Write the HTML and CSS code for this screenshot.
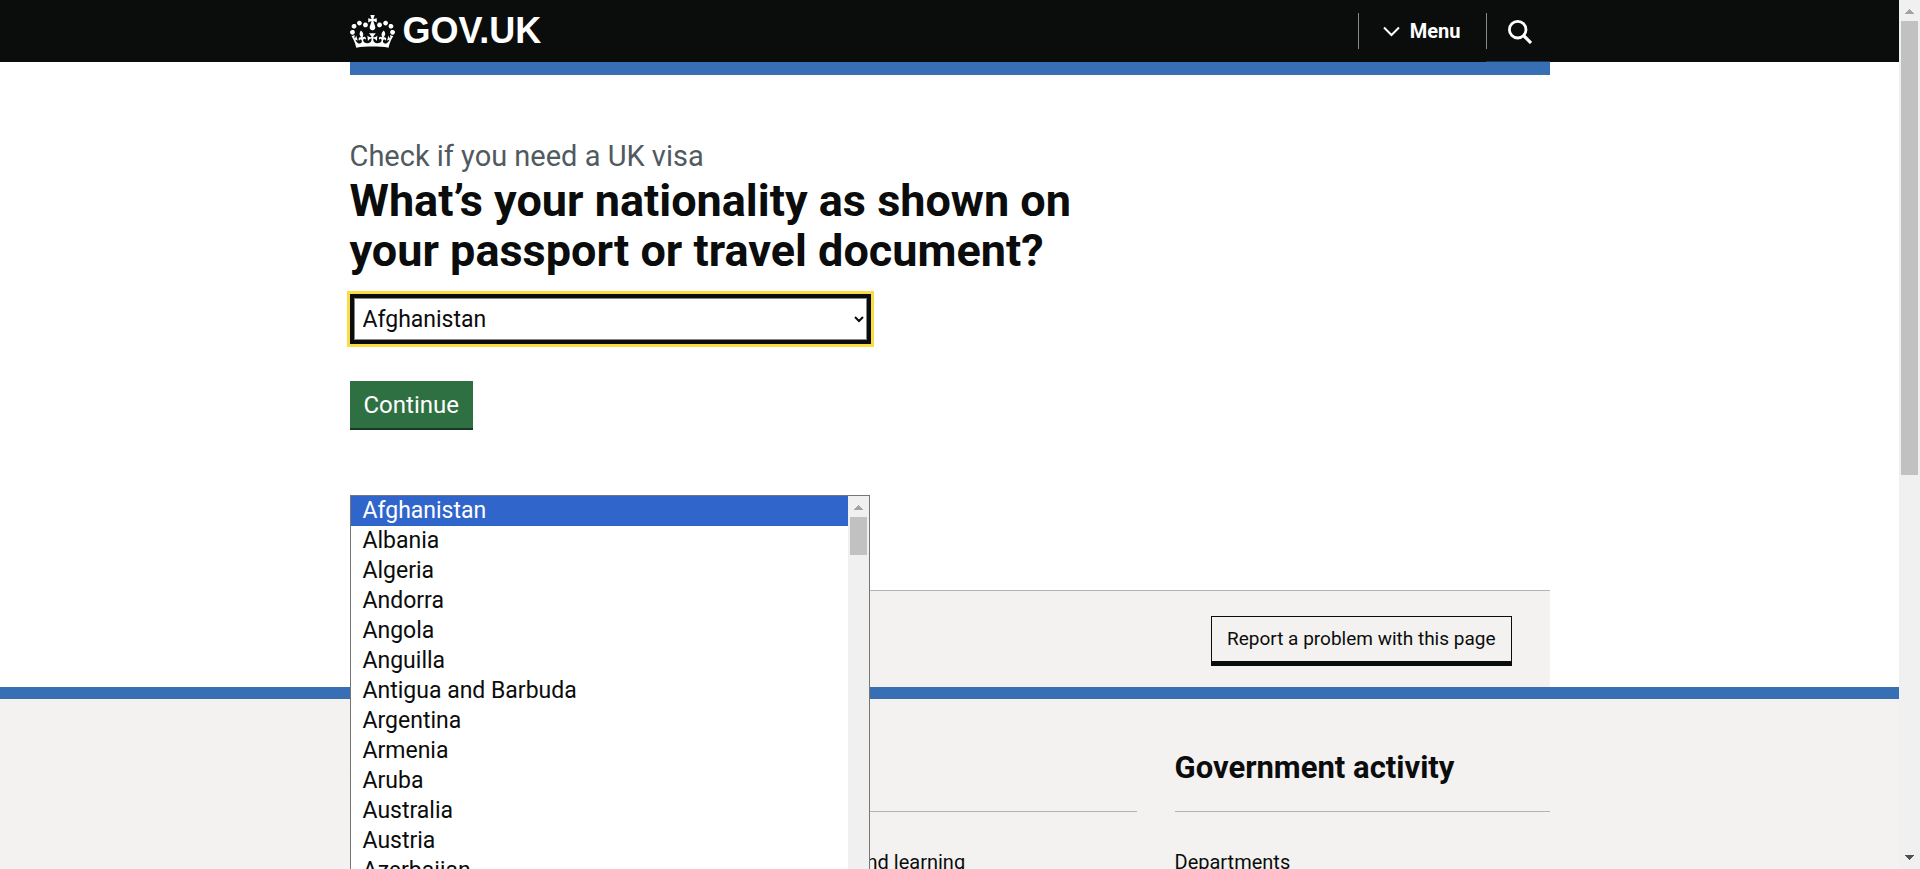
FILE: index.html
```html
<!DOCTYPE html>
<html lang="en">
<head>
<meta charset="utf-8">
<meta name="viewport" content="width=device-width, initial-scale=1">
<title>Check if you need a UK visa - GOV.UK</title>
<link rel="stylesheet" href="styles.css">
</head>
<body>
<div class="window">
  <div class="page">
    <header class="header">
      <div class="container header-row">
        <a class="logo" href="#" aria-label="GOV.UK">
          <svg class="crown" viewBox="0 0 132 97" aria-hidden="true"><path fill="currentColor" fill-rule="evenodd" d="M25 30.2c3.5 1.5 7.7-.2 9.1-3.7 1.5-3.6-.2-7.8-3.9-9.2-3.6-1.4-7.6.3-9.1 3.9-1.4 3.5.3 7.5 3.9 9zM9 39.5c3.6 1.5 7.8-.2 9.2-3.7 1.5-3.6-.2-7.8-3.9-9.1-3.6-1.5-7.6.2-9.1 3.8-1.4 3.5.3 7.5 3.8 9zM4.4 57.2c3.5 1.5 7.7-.2 9.1-3.8 1.5-3.6-.2-7.7-3.9-9.1-3.5-1.5-7.6.3-9.1 3.8-1.4 3.5.3 7.6 3.9 9.1zm38.3-21.4c3.5 1.5 7.7-.2 9.1-3.8 1.5-3.6-.2-7.7-3.9-9.1-3.6-1.5-7.6.3-9.1 3.8-1.3 3.6.4 7.7 3.9 9.1zm64.4-5.6c-3.6 1.5-7.8-.2-9.1-3.7-1.5-3.6.2-7.8 3.8-9.2 3.6-1.4 7.7.3 9.2 3.9 1.3 3.5-.4 7.5-3.9 9zm15.9 9.3c-3.6 1.5-7.7-.2-9.1-3.7-1.5-3.6.2-7.8 3.7-9.1 3.6-1.5 7.7.2 9.2 3.8 1.5 3.5-.3 7.5-3.8 9zm4.7 17.7c-3.6 1.5-7.8-.2-9.2-3.8-1.5-3.6.2-7.7 3.9-9.1 3.6-1.5 7.7.3 9.2 3.8 1.3 3.5-.4 7.6-3.9 9.1zM89.3 35.8c-3.6 1.5-7.8-.2-9.2-3.8-1.4-3.6.2-7.7 3.9-9.1 3.6-1.5 7.7.3 9.2 3.8 1.4 3.6-.3 7.7-3.9 9.1zM69.7 17.7l8.9 4.7V9.3l-8.9 2.8c-.2-.3-.5-.6-.9-.9L72.4 0H59.6l3.5 11.2c-.3.3-.6.5-.9.9l-8.8-2.8v13.1l8.8-4.7c.3.3.6.7.9.9l-5 15.4v.1c-.2.8-.4 1.6-.4 2.4 0 4.1 3.1 7.5 7 8.1h.2c.3 0 .7.1 1 .1.4 0 .7 0 1-.1h.2c4-.6 7.1-4.1 7.1-8.1 0-.8-.1-1.7-.4-2.4V34l-5.1-15.4c.4-.2.7-.6 1-.9zM66 92.8c16.9 0 32.8 1.1 47.1 3.2 4-16.9 8.9-26.7 14-33.5l-9.6-3.4c1 4.9 1.1 7.2 0 10.2-1.5-1.4-3-4.3-4.2-8.7L108.6 76c2.8-2 5-3.2 7.5-3.3-4.4 9.4-10 11.9-13.6 11.2-4.3-.8-6.3-4.6-5.6-7.9 1-4.7 5.7-5.9 8-.5 4.3-8.7-3-11.4-7.6-8.8 7.1-7.2 7.9-13.5 2.1-21.1-8 6.1-8.1 12.3-4.5 20.8-4.7-5.4-12.1-2.5-9.5 6.2 3.4-5.2 7.9-2 7.2 3.1-.6 4.3-6.4 7.8-13.5 7.2-10.3-.9-10.9-8-11.2-13.8 2.5-.5 7.1 1.8 11 7.3L80.2 60c-4.1 4.4-8 5.3-12.3 5.4 1.4-4.4 8-11.6 8-11.6H55.5s6.4 7.2 7.9 11.6c-4.2-.1-8-1-12.3-5.4l1.4 16.4c3.9-5.5 8.5-7.7 10.9-7.3-.3 5.8-.9 12.8-11.1 13.8-7.2.6-12.9-2.9-13.5-7.2-.7-5 3.8-8.3 7.1-3.1 2.7-8.7-4.6-11.6-9.4-6.2 3.7-8.5 3.6-14.7-4.6-20.8-5.8 7.6-5 13.9 2.2 21.1-4.7-2.6-11.9.1-7.7 8.8 2.3-5.5 7.1-4.2 8.1.5.7 3.3-1.3 7.1-5.7 7.9-3.5.7-9-1.8-13.5-11.2 2.5.1 4.7 1.3 7.5 3.3l-4.7-15.4c-1.2 4.4-2.7 7.2-4.3 8.7-1.1-3-.9-5.3 0-10.2l-9.5 3.4c5 6.9 9.9 16.7 14 33.5 14.8-2.1 30.8-3.2 47.7-3.2z"/></svg>
          <span>GOV.UK</span>
        </a>
        <nav class="header-nav" aria-label="Menu">
          <button class="menu-button" type="button">
            <svg class="chevron" viewBox="0 0 17 11" aria-hidden="true"><path d="M1 1.500l7.500 7.500L16 1.500" fill="none" stroke="currentColor" stroke-width="2"/></svg>
            <span>Menu</span>
          </button>
          <button class="search-button" type="button" aria-label="Search GOV.UK">
            <svg class="search-icon" viewBox="0 0 24 24" aria-hidden="true"><circle cx="9.700" cy="9.700" r="8.300" fill="none" stroke="currentColor" stroke-width="2.800"/><path d="M15.500 15.500l7.500 7.500" stroke="currentColor" stroke-width="3.200"/></svg>
          </button>
        </nav>
      </div>
    </header>
    <div class="container"><div class="header-bar"></div></div>

    <main class="container main">
      <form class="question">
        <span class="caption">Check if you need a UK visa</span>
        <h1 class="title"><label for="nationality">What’s your nationality as shown on your passport or travel document?</label></h1>
        <div class="picker">
          <select class="select" id="nationality" name="nationality">
            <option selected>Afghanistan</option>
          </select>
          <div class="popup">
            <ul class="options" role="listbox" aria-label="Nationality">
              <li class="option option-active" role="option" aria-selected="true">Afghanistan</li>
              <li class="option" role="option">Albania</li>
              <li class="option" role="option">Algeria</li>
              <li class="option" role="option">Andorra</li>
              <li class="option" role="option">Angola</li>
              <li class="option" role="option">Anguilla</li>
              <li class="option" role="option">Antigua and Barbuda</li>
              <li class="option" role="option">Argentina</li>
              <li class="option" role="option">Armenia</li>
              <li class="option" role="option">Aruba</li>
              <li class="option" role="option">Australia</li>
              <li class="option" role="option">Austria</li>
              <li class="option" role="option">Azerbaijan</li>
            </ul>
            <div class="scrollbar" aria-hidden="true">
              <svg class="arrow arrow-off" viewBox="0 0 9 5"><path d="M4 0h1v1h1v1h1v1h1v1h1v1H0V4h1V3h1V2h1V1h1z" fill="currentColor"/></svg>
              <div class="thumb thumb-short"></div>
            </div>
          </div>
        </div>
        <button class="continue" type="submit">Continue</button>
      </form>
    </main>

    <div class="container">
      <div class="feedback">
        <button class="report" type="button">Report a problem with this page</button>
      </div>
    </div>

    <footer class="footer">
      <div class="container footer-row">
        <section>
          <h2 class="footer-title">Services and information</h2>
          <ul class="footer-links footer-links-split">
            <li><a class="footer-link" href="#">Benefits</a></li>
            <li><a class="footer-link" href="#">Education and learning</a></li>
          </ul>
        </section>
        <section>
          <h2 class="footer-title">Government activity</h2>
          <ul class="footer-links">
            <li><a class="footer-link" href="#">Departments</a></li>
          </ul>
        </section>
      </div>
    </footer>
  </div>
  <div class="scrollbar" aria-hidden="true">
    <svg class="arrow arrow-off" viewBox="0 0 9 5"><path d="M4 0h1v1h1v1h1v1h1v1h1v1H0V4h1V3h1V2h1V1h1z" fill="currentColor"/></svg>
    <div class="track"><div class="thumb thumb-page"></div></div>
    <svg class="arrow" viewBox="0 0 9 5"><path d="M0 0h9v1H8v1H7v1H6v1H5v1H4V4H3V3H2V2H1V1H0z" fill="currentColor"/></svg>
  </div>
</div>
</body>
</html>
```
FILE: styles.css
```css
* {
  box-sizing: border-box;
}

body {
  margin: 0;
  background: #fff;
  color: #0b0c0c;
  font-family: Roboto, "Liberation Sans", sans-serif;
}

h1, h2, ul {
  margin: 0;
  padding: 0;
  list-style: none;
}

button {
  border: 0;
  border-radius: 0;
  font-family: inherit;
  cursor: pointer;
}

.window {
  display: grid;
  grid-template-columns: minmax(0, 1fr) 21px;
  height: 100vh;
  overflow: hidden;
}

.page {
  overflow: hidden;
}

.container {
  max-width: 1200px;
  margin: 0 auto;
}

/* Header */

.header {
  background: #0b0c0c;
  color: #fff;
}

.header-row {
  display: flex;
  justify-content: space-between;
  height: 62px;
}

.logo {
  display: flex;
  align-items: center;
  gap: 8px;
  color: #fff;
  font: bold 36px/60px "Liberation Sans", Arial, sans-serif;
  text-decoration: none;
}

.crown {
  width: 45px;
  height: 33px;
}

.header-nav {
  display: flex;
}

.menu-button,
.search-button {
  display: flex;
  align-items: center;
  position: relative;
  background: none;
  color: #fff;
}

.menu-button::before,
.search-button::before {
  content: "";
  position: absolute;
  left: 0;
  top: 13px;
  width: 1px;
  height: 36px;
  background: #868686;
}

.menu-button {
  gap: 10px;
  padding: 0 25px;
  font-size: 20px;
  font-weight: 700;
}

.chevron {
  width: 17px;
  height: 11px;
}

.search-button {
  width: 64px;
  padding: 2px 18px 0 22px;
  border-bottom: 1px solid #1d3557;
}

.search-icon {
  width: 24px;
  height: 24px;
}

.header-bar {
  height: 13px;
  background: #386eb4;
}

/* Question */

.main {
  padding: 62px 0 162px;
}

.question {
  max-width: 788px;
}

.caption {
  display: block;
  color: #505a5f;
  font-size: 29px;
  line-height: 38px;
}

.title {
  max-width: 740px;
  padding-top: 1px;
  font-size: 45px;
  line-height: 50px;
}

.picker {
  position: relative;
  width: 521px;
  max-width: 100%;
  margin: 18px 0 37px;
}

.select {
  display: block;
  width: 100%;
  height: 50px;
  padding: 4px 5px;
  border: 4px solid #0b0c0c;
  border-radius: 0;
  outline: 3px solid #fadd46;
  box-shadow: inset 0 0 0 1px #858686;
  background: #fff;
  color: #0b0c0c;
  font-family: inherit;
  font-size: 23px;
}

.popup {
  display: grid;
  grid-template-columns: minmax(0, 1fr) 21px;
  position: absolute;
  z-index: 2;
  top: 201px;
  left: 0;
  width: 520px;
  max-width: 100%;
  border: 1px solid #767676;
  background: #fff;
}

.option {
  padding: 0 12px;
  font-size: 23px;
  line-height: 30px;
}

.option-active {
  background: #3065cc;
  color: #fff;
}

.continue {
  display: block;
  padding: 1px 14px 0;
  background: #2e7042;
  box-shadow: 0 2px 0 #123b22;
  color: #fff;
  font-size: 24px;
  line-height: 46px;
}

/* Feedback strip */

.feedback {
  display: flex;
  justify-content: flex-end;
  padding: 25px 38px 21px;
  border-top: 1px solid #b1b4b6;
  background: #f3f2f1;
}

.report {
  padding: 0 15px;
  border: 1px solid #0b0c0c;
  border-bottom-width: 5px;
  background: #f3f2f1;
  color: #0b0c0c;
  font-size: 19px;
  line-height: 44px;
}

/* Footer */

.footer {
  border-top: 12px solid #386eb4;
  background: #f3f2f1;
}

.footer-row {
  display: grid;
  grid-template-columns: 787fr 375fr;
  gap: 38px;
  padding: 50px 0;
}

.footer-title {
  padding-bottom: 24px;
  border-bottom: 1px solid #b1b4b6;
  font-size: 31px;
  line-height: 38px;
}

.footer-links {
  padding-top: 38px;
}

.footer-links-split {
  display: grid;
  grid-template-columns: 1fr 1fr;
  gap: 38px;
}

.footer-link {
  color: #0b0c0c;
  font-size: 20px;
  line-height: 25px;
  text-decoration: none;
}

/* Scrollbars */

.scrollbar {
  display: flex;
  flex-direction: column;
  align-items: center;
  padding: 9px 0;
  background: #f0f0f0;
}

.arrow {
  width: 9px;
  height: 5px;
  color: #505050;
}

.arrow-off {
  color: #a3a3a3;
}

.track {
  flex: 1;
}

.thumb {
  width: 17px;
  margin-top: 7px;
  background: #c1c1c1;
}

.thumb-short {
  height: 38px;
}

.thumb-page {
  height: 54%;
}
```
